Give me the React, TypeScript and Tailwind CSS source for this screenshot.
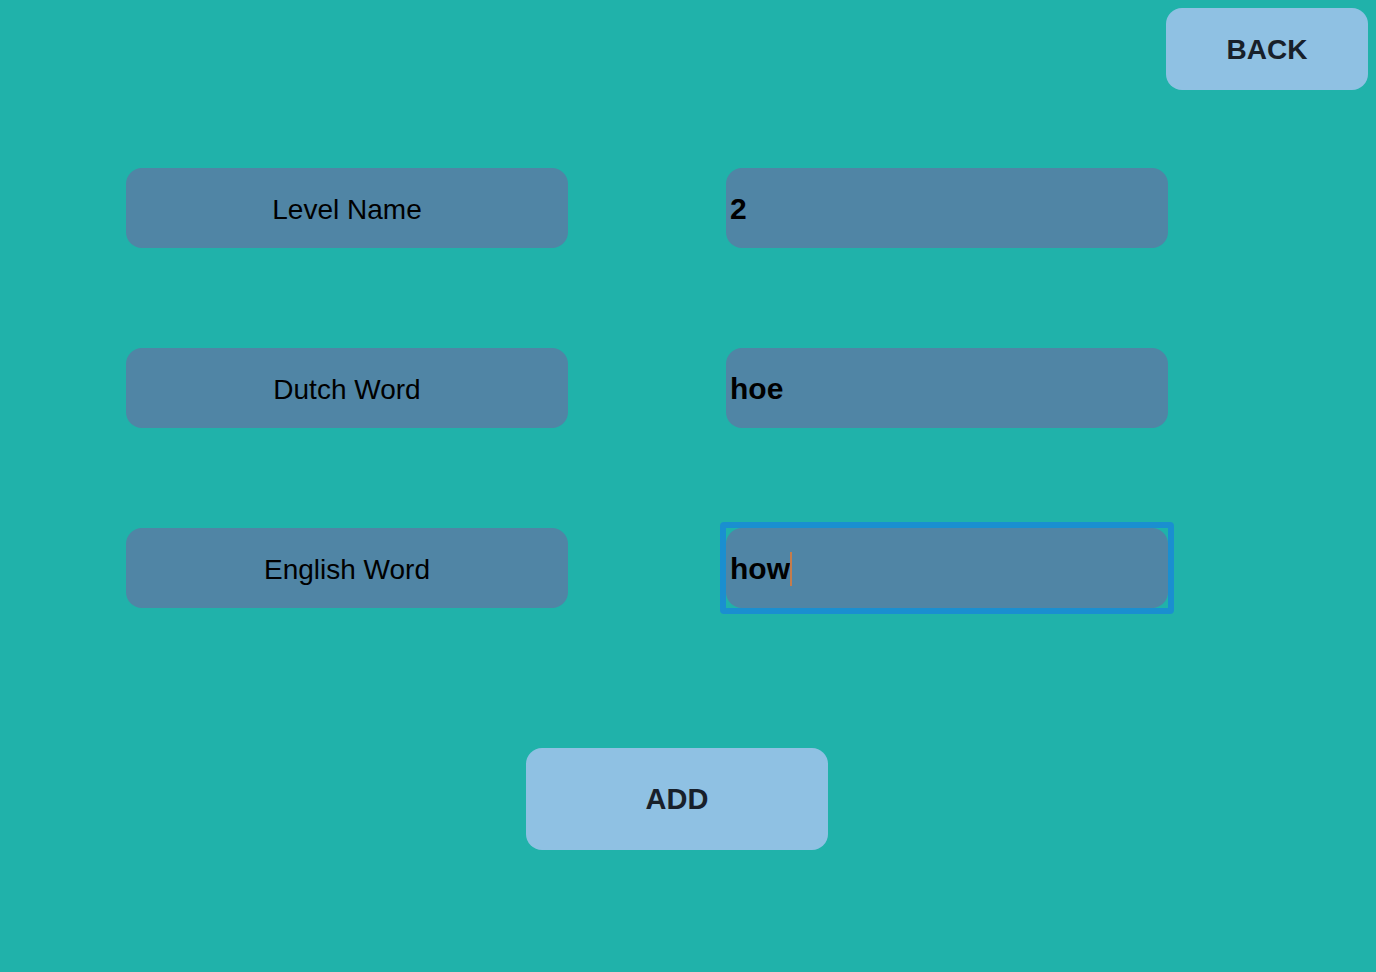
import { useEffect, useRef } from "react";

const rows = [
  { label: "Level Name", value: "2" },
  { label: "Dutch Word", value: "hoe" },
  { label: "English Word", value: "how", focused: true },
];

export default function App() {
  const focusRef = useRef<HTMLInputElement>(null);

  useEffect(() => {
    focusRef.current?.focus();
  }, []);

  return (
    <div
      className="min-h-screen w-full bg-[#20B2AA] flex flex-col"
      style={{ fontFamily: '"Liberation Sans", Arial, sans-serif' }}
    >
      {/* Top bar */}
      <div className="flex justify-end pt-2 pr-2">
        <button className="w-[202px] h-[82px] pt-[2px] rounded-2xl bg-[#8FC1E3] text-[#18202A] text-[28px] font-bold">
          BACK
        </button>
      </div>

      {/* Form rows */}
      <div className="flex flex-col gap-[100px] mt-[78px] pl-[126px]">
        {rows.map((row) => (
          <div key={row.label} className="flex items-center gap-[158px]">
            <div className="w-[442px] h-[80px] pt-[3px] rounded-2xl bg-[#5085A5] flex items-center justify-center text-[28px] text-black">
              {row.label}
            </div>
            <div className="relative w-[442px] h-[80px]">
              <input
                ref={row.focused ? focusRef : undefined}
                defaultValue={row.value}
                className="w-full h-full rounded-2xl bg-[#5085A5] pl-1 pt-[1px] text-[30px] font-bold text-black outline-none caret-transparent"
              />
              {row.focused && (
                <>
                  {/* focus ring */}
                  <div className="pointer-events-none absolute -inset-[6px] rounded-[4px] border-[6px] border-[#1A8FD0]" />
                  {/* caret */}
                  <div className="pointer-events-none absolute inset-0 flex items-center pl-1 pt-[1px] text-[30px] font-bold">
                    <span className="invisible">{row.value}</span>
                    <span className="w-[2px] h-[34px] bg-[#C57C4C]" />
                  </div>
                </>
              )}
            </div>
          </div>
        ))}
      </div>

      {/* Add button */}
      <div className="mt-[140px] pl-[526px]">
        <button className="w-[302px] h-[102px] pt-[2px] rounded-2xl bg-[#8FC1E3] text-[#18202A] text-[29px] font-bold">
          ADD
        </button>
      </div>
    </div>
  );
}
